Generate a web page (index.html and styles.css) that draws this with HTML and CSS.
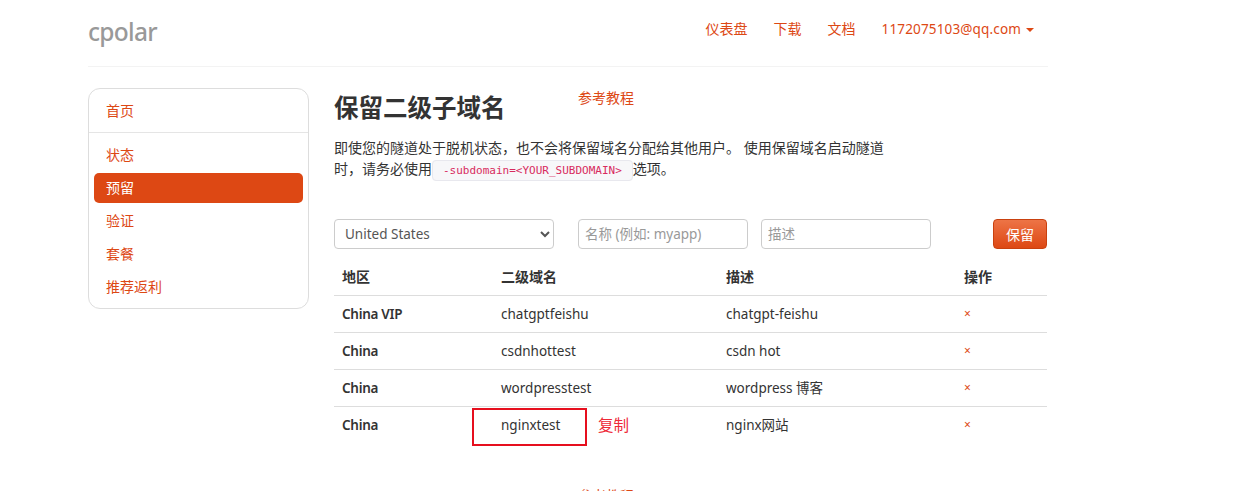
FILE: index.html
```html
<!DOCTYPE html>
<html lang="zh">
<head>
<meta charset="utf-8">
<title>cpolar</title>
<link rel="stylesheet" href="styles.css">
</head>
<body>
<div class="page">
  <header class="topbar">
    <a class="brand">cpolar</a>
    <nav class="topnav">
      <a>仪表盘</a>
      <a>下载</a>
      <a>文档</a>
      <a class="user">1172075103@qq.com<span class="caret"></span></a>
    </nav>
  </header>
  <div class="layout">
    <aside class="sidebar">
      <a class="side-item">首页</a>
      <div class="side-divider"></div>
      <a class="side-item">状态</a>
      <a class="side-item active">预留</a>
      <a class="side-item">验证</a>
      <a class="side-item">套餐</a>
      <a class="side-item">推荐返利</a>
    </aside>
    <main class="content">
      <div class="title-row">
        <h1>保留二级子域名</h1>
        <a class="ref">参考教程</a>
      </div>
      <p class="intro">即使您的隧道处于脱机状态，也不会将保留域名分配给其他用户。 使用保留域名启动隧道时，请务必使用<code>-subdomain=&lt;YOUR_SUBDOMAIN&gt;</code>选项。</p>
      <form class="reserve">
        <select class="field region"><option>United States</option></select>
        <input class="field name" placeholder="名称 (例如: myapp)">
        <input class="field desc" placeholder="描述">
        <button class="save" type="button">保留</button>
      </form>
      <table>
        <thead>
          <tr><th class="c1">地区</th><th class="c2">二级域名</th><th class="c3">描述</th><th>操作</th></tr>
        </thead>
        <tbody>
          <tr><td class="region-cell">China VIP</td><td>chatgptfeishu</td><td>chatgpt-feishu</td><td class="del">×</td></tr>
          <tr><td class="region-cell">China</td><td>csdnhottest</td><td>csdn hot</td><td class="del">×</td></tr>
          <tr><td class="region-cell">China</td><td>wordpresstest</td><td>wordpress 博客</td><td class="del">×</td></tr>
          <tr><td class="region-cell">China</td><td class="marked">nginxtest<span class="mark-box"></span><span class="mark-copy">复制</span></td><td>nginx网站</td><td class="del">×</td></tr>
        </tbody>
      </table>
      <a class="ref bottom-ref">参考教程</a>
    </main>
  </div>
</div>
</body>
</html>
```
FILE: styles.css
```css
* { box-sizing: border-box; }
html, body { margin: 0; height: 491px; overflow: hidden; background: #fff; }
body {
  font-family: "Noto Sans", "Noto Sans CJK SC", sans-serif;
  font-size: 14px;
  line-height: 20px;
  color: #333;
}
a { color: #dd4814; text-decoration: none; }
.page { width: 960px; margin-left: 88px; }

.topbar {
  height: 67px;
  border-bottom: 1px solid #f3f3f3;
  display: flex;
  justify-content: space-between;
  align-items: flex-start;
}
.brand { font-size: 24.5px; line-height: 32px; margin-top: 16px; color: #999; font-weight: 500; letter-spacing: -0.7px; }
.topnav { display: flex; gap: 26px; padding: 19px 14px 0 0; font-size: 14px; }
.user { display: flex; align-items: center; font-size: 13.5px; letter-spacing: 0.15px; }
.caret {
  width: 0; height: 0; margin-left: 5px; margin-top: 1px;
  border-left: 4px solid transparent;
  border-right: 4px solid transparent;
  border-top: 4px solid #dd4814;
}

.layout { display: flex; margin-top: 21px; }
.sidebar {
  width: 221px;
  height: 221px;
  border: 1px solid #ddd;
  border-radius: 12px;
  padding: 7px 5px 5px;
  flex: none;
}
.side-item {
  display: block;
  height: 30px;
  line-height: 30px;
  padding-left: 12px;
  margin-bottom: 3px;
  border-radius: 5px;
  font-size: 14px;
}
.side-item.active { background: #dd4814; color: #fff; }
.side-divider { height: 1px; background: #e5e5e5; margin: 6px -5px 7px; }

.content { margin-left: 25px; width: 713px; position: relative; }
.title-row { display: flex; align-items: flex-start; height: 42px; }
h1 { margin: 0; width: 244px; font-size: 24.5px; line-height: 40px; font-weight: 700; color: #333; }
.ref { font-size: 14px; line-height: 20px; }
.intro { margin: 7px 0 0; width: 552px; line-height: 21px; font-size: 14px; }
code {
  font-family: "DejaVu Sans Mono", monospace;
  font-size: 11px;
  line-height: 1;
  color: #d72b5e;
  background: #f7f7f9;
  border: 1px solid #e8e8ee;
  border-radius: 4px;
  padding: 3px 10px;
}

.reserve { display: flex; align-items: center; margin-top: 40px; height: 30px; }
.field {
  height: 30px;
  border: 1px solid #ccc;
  border-radius: 4px;
  background: #fff;
  font-family: inherit;
  font-size: 13.5px;
  color: #555;
}
.region { width: 220px; padding-left: 6px; }
.name { width: 170px; margin-left: 24px; padding: 0 6px; }
.desc { width: 170px; margin-left: 13px; padding: 0 6px; }
.field::placeholder { color: #999; opacity: 1; }
.save {
  width: 54px; height: 30px; margin-left: 62px;
  border: 1px solid #c9410f;
  border-radius: 4px;
  background: linear-gradient(#ed7446, #dd4814);
  color: #fff;
  font-family: inherit;
  font-size: 14px;
  padding: 0;
}

table { width: 713px; margin-top: 10px; border-collapse: collapse; table-layout: fixed; }
th, td { padding: 0 8px; text-align: left; height: 37px; font-size: 13.5px; color: #333; }
th { height: 36px; font-size: 14px; font-weight: 600; border-bottom: 1px solid #ddd; }
tbody tr + tr td { border-top: 1px solid #ddd; }
.c1 { width: 159px; }
.c2 { width: 225px; }
.c3 { width: 238px; }
.region-cell { font-size: 13.5px; font-weight: 600; letter-spacing: -0.3px; }
.del { color: #dd4814; font-size: 12px; padding-top: 1px; }
.marked { position: relative; }
.mark-box {
  position: absolute; left: -21px; top: 1px;
  width: 115px; height: 38px;
  border: 2px solid #e60f1e;
}
.mark-copy {
  position: absolute; left: 105px; top: 8px;
  color: #ee2a38; font-size: 15.5px;
}
.bottom-ref { position: absolute; left: 244px; top: 398px; }
```
